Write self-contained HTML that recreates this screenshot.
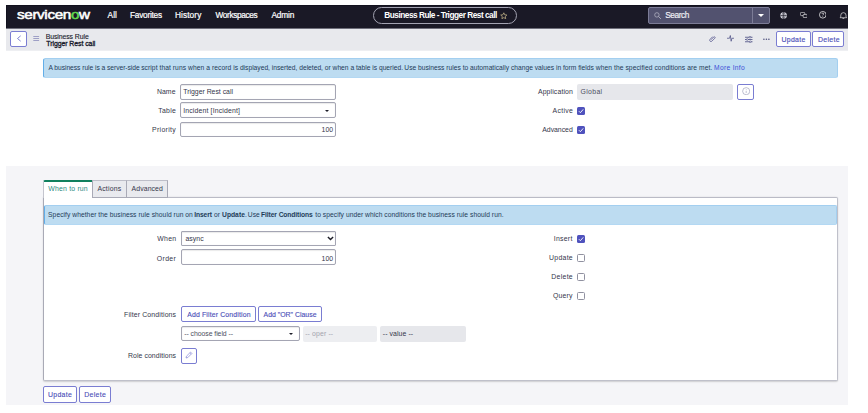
<!DOCTYPE html>
<html><head><meta charset="utf-8"><title>Business Rule</title>
<style>
*{box-sizing:border-box;margin:0;padding:0}
html,body{width:868px;height:413px;background:#fff;overflow:hidden}
body{font-family:"Liberation Sans",sans-serif;position:relative}
.a{position:absolute}
.t{position:absolute;white-space:nowrap;line-height:10px}
.nav{left:6px;top:5px;width:842px;height:23px;background:#1a1926;border-top:1px solid #12111e;border-left:1px solid #12111e}
.hdr{left:6px;top:28px;width:842px;height:23px;background:#e8e9ed;border-bottom:1px solid #eeeff2}
.gray{left:6px;top:166px;width:842px;height:239px;background:#f5f5f8}
.info{background:#bddcf1;border:1px solid #a3cff0;border-left-color:#62aee8;border-bottom-color:#b3d8f3;border-radius:2.5px}
.inp{background:#fff;border:1px solid #a4a5b3;border-radius:2px;box-shadow:inset 0 .5px 1px rgba(0,0,0,.15)}
.ro{background:#e6e7eb;border-radius:2px}
.btn{background:#fff;border:1px solid #7a7dd2;border-radius:2px}
.cb{width:8px;height:8px;border-radius:1.5px}
.on{background:#4f52bd}
.off{background:#fff;border:1px solid #9091a0}
.car{width:0;height:0;border-left:2.100px solid transparent;border-right:2.100px solid transparent;border-top:2.600px solid #1c1d28}
</style></head><body>
<div class="a nav"></div>
<div class="a hdr"></div>
<div class="a" style="left:6px;top:28px;width:842px;height:1px;background:#6e6e7a"></div>
<div class="a gray"></div>
<!-- nav -->
<div class="a" style="left:373px;top:7px;width:144.300px;height:17px;border:1px solid #a3a3b2;border-radius:9px"></div>
<svg class="a" style="left:499.800px;top:11.600px" width="7.600" height="7.600" viewBox="0 0 24 24"><path d="M12 2.500l2.900 6.300 6.800.8-5 4.700 1.300 6.800L12 17.700 5.900 21.100l1.300-6.800-5-4.700 6.800-.8z" fill="none" stroke="#cdbd8e" stroke-width="2.300" stroke-linejoin="round"/></svg>
<div class="a" style="left:648px;top:7.300px;width:121.500px;height:16.600px;background:#52526f;border:1px solid #7c7c96;border-radius:2px"></div>
<div class="a" style="left:752.400px;top:8px;width:1px;height:15px;background:#7c7c96"></div>
<svg class="a" style="left:653.800px;top:11.700px" width="7.400" height="7.400" viewBox="0 0 14 14"><circle cx="5.500" cy="5.500" r="4.200" fill="none" stroke="#bdbdcc" stroke-width="1.300"/><path d="M8.600 8.600L13.200 13.200" stroke="#bdbdcc" stroke-width="1.500"/></svg>
<div class="a" style="left:757.700px;top:13.500px;width:0;height:0;border-left:3px solid transparent;border-right:3px solid transparent;border-top:3.200px solid #fff"></div>
<svg class="a" style="left:780px;top:11.500px" width="7.200" height="7.200" viewBox="0 0 16 16"><circle cx="8" cy="8" r="7.200" fill="#e4e4ec"/><path d="M8 1v14M1 8h14" stroke="#1a1926" stroke-width="1.500"/><ellipse cx="8" cy="8" rx="3.400" ry="7" fill="none" stroke="#1a1926" stroke-width="1.100"/></svg>
<svg class="a" style="left:799.800px;top:12px" width="7.600" height="6" viewBox="0 0 19 15"><rect x="1" y="1" width="11" height="8" rx="2.500" fill="none" stroke="#fff" stroke-width="1.500"/><rect x="8" y="6" width="10" height="8" rx="2" fill="#1a1926" stroke="#fff" stroke-width="1.500"/></svg>
<svg class="a" style="left:818.900px;top:11.200px" width="7.600" height="7.600" viewBox="0 0 16 16"><circle cx="8" cy="8" r="7" fill="none" stroke="#fff" stroke-width="1.500"/><path d="M6 6.300c0-1.200.9-2 2-2s2 .8 2 1.900c0 1.400-2 1.500-2 3" fill="none" stroke="#fff" stroke-width="1.400"/><circle cx="8" cy="11.700" r=".9" fill="#fff"/></svg>
<svg class="a" style="left:839px;top:11.500px" width="8.800" height="7" viewBox="0 0 20 16"><path d="M4 11.500V7.500a6 6 0 0 1 12 0v4l1.500 1.500H2.500z" fill="none" stroke="#fff" stroke-width="1.400"/><path d="M8 15h4" stroke="#fff" stroke-width="1.400"/></svg>
<div class="a" style="left:848px;top:0;width:20px;height:413px;background:#fff"></div>
<!-- header -->
<div class="a btn" style="left:10px;top:31px;width:16.700px;height:16px"></div>
<svg class="a" style="left:15.500px;top:35px" width="6" height="7" viewBox="0 0 6 7"><path d="M4.700 .8L1.500 3.500 4.700 6.200" fill="none" stroke="#6265c8" stroke-width=".8"/></svg>
<svg class="a" style="left:33px;top:35px" width="7" height="7" viewBox="0 0 7 7"><path d="M.3 1.500h5.800M.3 3.500h5.800M.3 5.500h5.800" stroke="#7e80b4" stroke-width=".7"/></svg>
<svg class="a" style="left:709.200px;top:34.800px" width="7" height="7" viewBox="0 0 14 14"><path d="M4 9.500l5.500-5.500a1.600 1.600 0 0 1 2.300 2.300l-6 6a2.600 2.600 0 0 1-3.700-3.700l5.500-5.500" fill="none" stroke="#4c4e88" stroke-width="1.400"/></svg>
<svg class="a" style="left:727.200px;top:35.300px" width="7" height="7" viewBox="0 0 14 14"><path d="M0 6.500h5l1.700-5.500 1.600 11.500 1.500-6H14" fill="none" stroke="#44467e" stroke-width="1.400"/></svg>
<svg class="a" style="left:745px;top:35.500px" width="7.500" height="7" viewBox="0 0 15 14"><path d="M0 2.500h15M0 7h15M0 11.500h15" stroke="#3e407a" stroke-width="1.500"/><circle cx="10" cy="2.500" r="1.800" fill="#e8e9ed" stroke="#3e407a"/><circle cx="4.500" cy="7" r="1.800" fill="#e8e9ed" stroke="#3e407a"/><circle cx="10.500" cy="11.500" r="1.800" fill="#e8e9ed" stroke="#3e407a"/></svg>
<svg class="a" style="left:763px;top:38px" width="7" height="2.400" viewBox="0 0 7 2.400"><circle cx=".9" cy="1.200" r=".8" fill="#50527f"/><circle cx="3.400" cy="1.200" r=".8" fill="#50527f"/><circle cx="5.900" cy="1.200" r=".8" fill="#50527f"/></svg>
<div class="a btn" style="left:776px;top:31px;width:34.700px;height:16px"></div>
<div class="a btn" style="left:812.400px;top:31px;width:31.800px;height:16px"></div>
<!-- info 1 -->
<div class="a info" style="left:43px;top:58px;width:795px;height:20px"></div>
<!-- fields col 1 -->
<div class="a inp" style="left:180px;top:84px;width:155.500px;height:16px"></div>
<div class="a inp" style="left:180px;top:102px;width:155.500px;height:16.400px"></div>
<div class="a car" style="left:325px;top:110px"></div>
<div class="a inp" style="left:180px;top:122px;width:155.500px;height:15px"></div>
<!-- fields col 2 -->
<div class="a ro" style="left:577px;top:84px;width:155.500px;height:16px"></div>
<div class="a btn" style="left:737px;top:84px;width:17px;height:16px"></div>
<svg class="a" style="left:741.800px;top:86.800px" width="8.400" height="8.400" viewBox="0 0 16 16"><circle cx="8" cy="8" r="6.800" fill="none" stroke="#8486a6" stroke-width="1"/><path d="M8 7.200v4.300" stroke="#9a9cb8" stroke-width="1.200"/><circle cx="8" cy="5" r=".8" fill="#9a9cb8"/></svg>
<div class="a cb on" style="left:577px;top:107px"></div>
<svg class="a" style="left:577px;top:107px" width="8" height="8" viewBox="0 0 8 8"><path d="M1.900 4.200l1.500 1.500 2.800-3.300" fill="none" stroke="#fff" stroke-width=".9"/></svg>
<div class="a cb on" style="left:577px;top:126px"></div>
<svg class="a" style="left:577px;top:126px" width="8" height="8" viewBox="0 0 8 8"><path d="M1.900 4.200l1.500 1.500 2.800-3.300" fill="none" stroke="#fff" stroke-width=".9"/></svg>
<!-- tabs + panel -->
<div class="a" style="left:43px;top:197px;width:794.500px;height:184px;background:#fff;border:1px solid #bfc0ca;border-top-color:#babbc6;border-left-color:#a9aab6;border-radius:0 2px 2px 2px;box-shadow:0 .5px 1.500px rgba(0,0,0,.16)"></div>
<div class="a" style="left:92px;top:180px;width:35px;height:18px;background:#e9eaee;border:1px solid #a9aab6;border-top-color:#bdbec8;border-right:none"></div>
<div class="a" style="left:126px;top:180px;width:42px;height:18px;background:#e9eaee;border:1px solid #a9aab6;border-top-color:#bdbec8"></div>
<div class="a" style="left:43px;top:180px;width:49px;height:18px;background:#fff;border-left:1px solid #c4c5ce;border-top:2px solid #10805e;border-radius:2px 0 0 0"></div>
<!-- info 2 -->
<div class="a info" style="left:44px;top:205px;width:793px;height:20px;border-radius:2px"></div>
<!-- panel fields -->
<div class="a inp" style="left:181px;top:231px;width:154.700px;height:15px;border-radius:1px"></div>
<svg class="a" style="left:326.500px;top:236px" width="7" height="5" viewBox="0 0 7 5"><path d="M.9 .9L3.500 3.600 6.100 .9" fill="none" stroke="#1d1e28" stroke-width="1.400"/></svg>
<div class="a inp" style="left:181px;top:249px;width:154.700px;height:16px"></div>
<div class="a cb on" style="left:577px;top:235px"></div>
<svg class="a" style="left:577px;top:235px" width="8" height="8" viewBox="0 0 8 8"><path d="M1.900 4.200l1.500 1.500 2.800-3.300" fill="none" stroke="#fff" stroke-width=".9"/></svg>
<div class="a cb off" style="left:577px;top:254px"></div>
<div class="a cb off" style="left:577px;top:273px"></div>
<div class="a cb off" style="left:577px;top:291.500px"></div>
<div class="a btn" style="left:181px;top:306px;width:74.500px;height:16px"></div>
<div class="a btn" style="left:258px;top:306px;width:64px;height:16px"></div>
<div class="a inp" style="left:181px;top:325.500px;width:118.500px;height:15.500px"></div>
<div class="a car" style="left:289.200px;top:333px"></div>
<div class="a" style="left:302.600px;top:326px;width:74px;height:15.500px;background:#edeef1;border-radius:2px"></div>
<div class="a ro" style="left:380.200px;top:326px;width:85.700px;height:15.500px"></div>
<div class="a btn" style="left:181px;top:348px;width:15.600px;height:16px"></div>
<svg class="a" style="left:185px;top:351px" width="8" height="8" viewBox="0 0 16 16"><path d="M2 14l.9-3.600 8.200-8.200 2.700 2.700-8.200 8.200z" fill="none" stroke="#7679d0" stroke-width="1.300" stroke-linejoin="round"/><path d="M9.600 3.700l2.700 2.700" stroke="#7679d0" stroke-width="1"/></svg>
<!-- bottom buttons -->
<div class="a btn" style="left:43.100px;top:386.200px;width:34.200px;height:16.600px"></div>
<div class="a btn" style="left:79.200px;top:386.200px;width:31.500px;height:16.600px"></div>

<!-- text -->
<div class="t" style="left:16.58px;top:10.29px;font-size:13.6px;color:#fff;letter-spacing:-0.310px;-webkit-text-stroke:.55px #fff;transform:scaleX(1.12);transform-origin:0 0;">servicen<span style="color:#62d84e;-webkit-text-stroke-color:#62d84e">o</span>w</div>
<div class="t" style="left:107.60px;top:10.12px;font-size:8.3px;color:#fff;-webkit-text-stroke:.2px #fff;">All</div>
<div class="t" style="left:129.96px;top:10.12px;font-size:8.3px;color:#fff;letter-spacing:-0.248px;-webkit-text-stroke:.2px #fff;">Favorites</div>
<div class="t" style="left:174.88px;top:10.12px;font-size:8.3px;color:#fff;letter-spacing:0.111px;-webkit-text-stroke:.2px #fff;">History</div>
<div class="t" style="left:215.44px;top:10.12px;font-size:8.3px;color:#fff;letter-spacing:-0.368px;-webkit-text-stroke:.2px #fff;">Workspaces</div>
<div class="t" style="left:271.44px;top:10.12px;font-size:8.3px;color:#fff;letter-spacing:-0.135px;-webkit-text-stroke:.2px #fff;">Admin</div>
<div class="t" style="left:384.23px;top:10.12px;font-size:8.3px;color:#fff;font-weight:bold;letter-spacing:-0.500px;">Business Rule - Trigger Rest call</div>
<div class="t" style="left:665.22px;top:10.12px;font-size:8.3px;color:#f2f2f8;letter-spacing:-0.424px;-webkit-text-stroke:.15px #f2f2f8;">Search</div>
<div class="t" style="left:45.65px;top:31.61px;font-size:6.9px;color:#17182a;letter-spacing:-0.078px;-webkit-text-stroke:.1px #17182a;">Business Rule</div>
<div class="t" style="left:46.25px;top:38.61px;font-size:6.9px;color:#17182a;letter-spacing:-0.047px;-webkit-text-stroke:.3px #17182a;">Trigger Rest call</div>
<div class="t" style="left:781.51px;top:34.61px;font-size:6.9px;color:#4b4eb8;letter-spacing:0.320px;-webkit-text-stroke:.15px #4b4eb8;">Update</div>
<div class="t" style="left:818.06px;top:34.61px;font-size:6.9px;color:#4b4eb8;letter-spacing:0.320px;-webkit-text-stroke:.15px #4b4eb8;">Delete</div>
<div class="t" style="left:48.47px;top:62.68px;font-size:6.7px;color:#1d3b58;letter-spacing:-0.043px;">A business rule is a server-side</div>
<div class="t" style="left:141.18px;top:62.68px;font-size:6.7px;color:#1d3b58;letter-spacing:0.067px;">script that runs when a record is</div>
<div class="t" style="left:239.92px;top:62.68px;font-size:6.7px;color:#1d3b58;letter-spacing:-0.008px;">displayed, inserted, deleted, or when a table is queried.</div>
<div class="t" style="left:404.34px;top:62.68px;font-size:6.7px;color:#1d3b58;letter-spacing:-0.002px;">Use business rules to automatically change values in form fields</div>
<div class="t" style="left:595.75px;top:62.68px;font-size:6.7px;color:#1d3b58;letter-spacing:0.075px;">when the specified conditions are met.</div>
<div class="t" style="left:714.12px;top:62.68px;font-size:6.7px;color:#3d4fd6;letter-spacing:0.288px;">More Info</div>
<div class="t" style="left:156.88px;top:86.61px;font-size:6.9px;color:#34364a;letter-spacing:0.087px;">Name</div>
<div class="t" style="left:158.15px;top:105.61px;font-size:6.9px;color:#34364a;letter-spacing:0.293px;">Table</div>
<div class="t" style="left:152.00px;top:124.61px;font-size:6.9px;color:#34364a;letter-spacing:0.320px;">Priority</div>
<div class="t" style="left:183.29px;top:86.61px;font-size:6.9px;color:#34364a;letter-spacing:-0.014px;">Trigger Rest call</div>
<div class="t" style="left:183.17px;top:105.61px;font-size:6.9px;color:#34364a;letter-spacing:0.156px;">Incident [Incident]</div>
<div class="t" style="left:321.55px;top:124.61px;font-size:6.9px;color:#34364a;">100</div>
<div class="t" style="left:537.93px;top:86.61px;font-size:6.9px;color:#34364a;letter-spacing:0.123px;">Application</div>
<div class="t" style="left:580.59px;top:86.61px;font-size:6.9px;color:#4c4e60;letter-spacing:0.320px;">Global</div>
<div class="t" style="left:552.49px;top:105.61px;font-size:6.9px;color:#34364a;letter-spacing:0.320px;">Active</div>
<div class="t" style="left:542.26px;top:124.61px;font-size:6.9px;color:#34364a;letter-spacing:-0.023px;">Advanced</div>
<div class="t" style="left:48.37px;top:183.61px;font-size:6.9px;color:#2a8a82;letter-spacing:0.180px;">When to run</div>
<div class="t" style="left:97.45px;top:183.61px;font-size:6.9px;color:#34364a;letter-spacing:0.177px;">Actions</div>
<div class="t" style="left:131.49px;top:183.61px;font-size:6.9px;color:#34364a;letter-spacing:0.109px;">Advanced</div>
<div class="t" style="left:48.10px;top:209.68px;font-size:6.7px;color:#1d3b58;letter-spacing:0.051px;">Specify whether the business rule should run on</div>
<div class="t" style="left:194.17px;top:209.68px;font-size:6.7px;color:#1d3b58;font-weight:bold;letter-spacing:-0.068px;">Insert</div>
<div class="t" style="left:214.00px;top:209.68px;font-size:6.7px;color:#1d3b58;">or</div>
<div class="t" style="left:222.03px;top:209.68px;font-size:6.7px;color:#1d3b58;font-weight:bold;letter-spacing:0.036px;">Update</div>
<div class="t" style="left:245.10px;top:209.68px;font-size:6.7px;color:#1d3b58;">.</div>
<div class="t" style="left:247.83px;top:209.68px;font-size:6.7px;color:#1d3b58;">Use</div>
<div class="t" style="left:261.08px;top:209.68px;font-size:6.7px;color:#1d3b58;font-weight:bold;letter-spacing:-0.094px;">Filter Conditions</div>
<div class="t" style="left:315.31px;top:209.68px;font-size:6.7px;color:#1d3b58;letter-spacing:0.044px;">to specify under which conditions the business rule should run.</div>
<div class="t" style="left:157.20px;top:233.61px;font-size:6.9px;color:#34364a;letter-spacing:0.320px;">When</div>
<div class="t" style="left:156.86px;top:253.61px;font-size:6.9px;color:#34364a;letter-spacing:0.320px;">Order</div>
<div class="t" style="left:185.48px;top:233.61px;font-size:6.9px;color:#34364a;letter-spacing:0.033px;">async</div>
<div class="t" style="left:321.55px;top:253.61px;font-size:6.9px;color:#34364a;">100</div>
<div class="t" style="left:553.69px;top:233.61px;font-size:6.9px;color:#34364a;letter-spacing:0.282px;">Insert</div>
<div class="t" style="left:549.02px;top:252.61px;font-size:6.9px;color:#34364a;letter-spacing:0.290px;">Update</div>
<div class="t" style="left:551.19px;top:271.61px;font-size:6.9px;color:#34364a;letter-spacing:0.320px;">Delete</div>
<div class="t" style="left:552.88px;top:290.61px;font-size:6.9px;color:#34364a;letter-spacing:0.202px;">Query</div>
<div class="t" style="left:124.11px;top:309.61px;font-size:6.9px;color:#34364a;letter-spacing:0.132px;">Filter Conditions</div>
<div class="t" style="left:187.18px;top:309.61px;font-size:6.9px;color:#4b4eb8;letter-spacing:0.150px;-webkit-text-stroke:.12px #4b4eb8;">Add Filter Condition</div>
<div class="t" style="left:263.56px;top:309.61px;font-size:6.9px;color:#4b4eb8;letter-spacing:0.013px;-webkit-text-stroke:.12px #4b4eb8;">Add "OR" Clause</div>
<div class="t" style="left:184.25px;top:328.61px;font-size:6.9px;color:#4c4e60;letter-spacing:-0.060px;">-- choose field --</div>
<div class="t" style="left:305.16px;top:328.61px;font-size:6.9px;color:#a3a4ae;letter-spacing:0.133px;">-- oper --</div>
<div class="t" style="left:382.76px;top:328.61px;font-size:6.9px;color:#34364a;letter-spacing:0.090px;">-- value --</div>
<div class="t" style="left:127.98px;top:350.61px;font-size:6.9px;color:#34364a;letter-spacing:0.070px;">Role conditions</div>
<div class="t" style="left:48.11px;top:389.61px;font-size:6.9px;color:#4b4eb8;letter-spacing:0.279px;-webkit-text-stroke:.12px #4b4eb8;">Update</div>
<div class="t" style="left:84.35px;top:389.61px;font-size:6.9px;color:#4b4eb8;letter-spacing:0.302px;-webkit-text-stroke:.12px #4b4eb8;">Delete</div>
</body></html>
